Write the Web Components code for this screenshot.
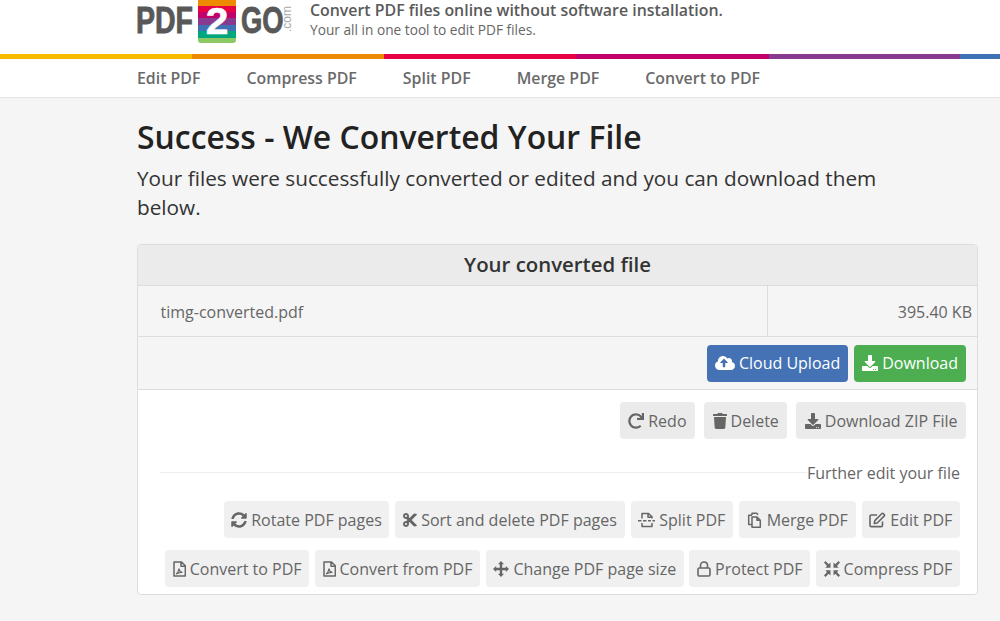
<!DOCTYPE html>
<html lang="en">
<head>
<meta charset="utf-8">
<title>PDF2GO</title>
<style>
  html { overflow: hidden; }
  body { margin: 0; background: #f5f5f5; font-family: "Open Sans", sans-serif; color: #555; }
</style>
</head>
<body>
<site-header></site-header>
<colour-bar></colour-bar>
<site-nav></site-nav>
<result-page></result-page>

<script>
const FA = {
  download: [512, '<path d="M216 0h80c13.3 0 24 10.7 24 24v168h87.7c17.8 0 26.7 21.5 14.1 34.1L269.7 378.3c-7.5 7.5-19.8 7.5-27.3 0L90.1 226.1c-12.6-12.6-3.7-34.1 14.1-34.1H192V24c0-13.3 10.7-24 24-24zm296 376v112c0 13.3-10.7 24-24 24H24c-13.3 0-24-10.7-24-24V376c0-13.3 10.7-24 24-24h146.7l49 49c20.1 20.1 52.5 20.1 72.6 0l49-49H488c13.3 0 24 10.7 24 24zm-124 88c0-11-9-20-20-20s-20 9-20 20 9 20 20 20 20-9 20-20zm64 0c0-11-9-20-20-20s-20 9-20 20 9 20 20 20 20-9 20-20z"/>'],
  trash: [448, '<path d="M432 32H312l-9.4-18.7A24 24 0 0 0 281.1 0H166.8a23.72 23.72 0 0 0-21.4 13.3L136 32H16A16 16 0 0 0 0 48v32a16 16 0 0 0 16 16h416a16 16 0 0 0 16-16V48a16 16 0 0 0-16-16zM53.2 467a48 48 0 0 0 47.9 45h245.8a48 48 0 0 0 47.9-45L416 128H32z"/>'],
  redo: [512, '<path d="M500.33 0h-47.41a12 12 0 0 0-12 12.57l4 82.76A247.42 247.42 0 0 0 256 8C119.34 8 7.9 119.53 8 256.19 8.1 393.07 119.1 504 256 504a247.1 247.1 0 0 0 166.18-63.91 12 12 0 0 0 .48-17.43l-34-34a12 12 0 0 0-16.38-.55A176 176 0 1 1 402.1 157.8l-101.53-4.87a12 12 0 0 0-12.57 12v47.41a12 12 0 0 0 12 12h200.33a12 12 0 0 0 12-12V12a12 12 0 0 0-12-12z"/>'],
  sync: [512, '<path d="M370.72 133.28C339.458 104.008 298.888 87.962 255.848 88c-77.458.068-144.328 53.178-162.791 126.85-1.344 5.363-6.122 9.15-11.651 9.15H24.103c-7.498 0-13.194-6.807-11.807-14.176C33.933 94.924 134.813 8 256 8c66.448 0 126.791 26.136 171.315 68.685L463.03 40.97C478.149 25.851 504 36.559 504 57.941V192c0 13.255-10.745 24-24 24H345.941c-21.382 0-32.09-25.851-16.971-40.971l41.75-41.749zM32 296h134.059c21.382 0 32.09 25.851 16.971 40.971l-41.75 41.75c31.262 29.273 71.835 45.319 114.876 45.28 77.418-.07 144.315-53.144 162.787-126.849 1.344-5.363 6.122-9.15 11.651-9.15h57.304c7.498 0 13.194 6.807 11.807 14.176C478.067 417.076 377.187 504 256 504c-66.448 0-126.791-26.136-171.315-68.685L48.97 471.03C33.851 486.149 8 475.441 8 454.059V320c0-13.255 10.745-24 24-24z"/>'],
  cut: [448, '<path d="M278.06 256L444.48 89.57c4.69-4.69 4.69-12.29 0-16.97-32.8-32.8-85.99-32.8-118.79 0L210.18 188.12l-24.86-24.86c4.31-10.92 6.68-22.81 6.68-35.26 0-53.02-42.98-96-96-96S0 74.98 0 128s42.98 96 96 96c4.54 0 8.99-.32 13.36-.93L142.29 256l-32.93 32.93c-4.37-.61-8.83-.93-13.36-.93-53.02 0-96 42.98-96 96s42.98 96 96 96 96-42.98 96-96c0-12.45-2.37-24.34-6.68-35.26l24.86-24.86L325.69 439.4c32.8 32.8 85.99 32.8 118.79 0 4.69-4.68 4.69-12.28 0-16.97L278.06 256zM96 160c-17.64 0-32-14.36-32-32s14.36-32 32-32 32 14.36 32 32-14.36 32-32 32zm0 256c-17.64 0-32-14.36-32-32s14.36-32 32-32 32 14.36 32 32-14.36 32-32 32z"/>'],
  cloud: [640, '<path fill-rule="evenodd" d="M537.6 226.6c4.1-10.7 6.4-22.4 6.4-34.6 0-53-43-96-96-96-19.7 0-38.1 6-53.3 16.2C367 64.2 315.3 32 256 32c-88.4 0-160 71.6-160 160 0 2.7.1 5.4.2 8.1C40.2 219.8 0 273.2 0 336c0 79.500 64.500 144 144 144h368c70.700 0 128-57.300 128-128 0-61.900-44-113.600-102.400-125.400zM393 259.300h-65V372c0 8.800-7.200 16-16 16h-48c-8.800 0-16-7.200-16-16V259.300h-65c-14.300 0-21.400-17.200-11.300-27.300l105-105c6.200-6.200 16.400-6.200 22.600 0l105 105c10.100 10.100 3 27.300-11.300 27.300z"/>'],
  split: [17, '<path fill="none" stroke="currentColor" stroke-width="1.5" stroke-linejoin="round" d="M4 6.500V1.500h6.500L14 4.800v1.700M10 1.500v3.700h4M4 11v3.500h10V11"/><path fill="none" stroke="currentColor" stroke-width="1.500" d="M0 8.800h3.500M5 8.800h3.500M10 8.800h3M14.500 8.800H17"/>'],
  copy: [16, '<path fill="none" stroke="currentColor" stroke-width="1.5" stroke-linejoin="round" d="M5 3V1.200h4.600L11 2.600M5 12.500H1.700V3.200H5M5 5h5l3.300 3.200v7H5zM10 5v3.200h3.300"/>'],
  edit: [17, '<path fill="none" stroke="currentColor" stroke-width="1.600" stroke-linejoin="round" d="M13.500 9.500v3.700c0 .9-.6 1.400-1.400 1.400H2.400c-.8 0-1.400-.5-1.400-1.400V4.400C1 3.500 1.600 3 2.400 3H8"/><path fill="none" stroke="currentColor" stroke-width="1.600" stroke-linejoin="round" d="M5.800 8.600l-.5 2.900 2.900-.5 6.900-6.900c.5-.5.5-1.200 0-1.700l-.7-.7c-.5-.5-1.200-.5-1.700 0z"/>'],
  pdf: [13, '<path fill="none" stroke="currentColor" stroke-width="1.500" stroke-linejoin="round" d="M1 1h7.500l3.800 3.700V15H1zM8 1v4.200h4.300"/><path fill="none" stroke="currentColor" stroke-width="1.100" d="M3 13c1.400-.8 2.600-3 3-5.400.2 2 1.200 3.400 3.400 3.800-2-.1-4.700.4-6.400 1.600z"/>'],
  move: [16, '<path d="M8 0l3 3.200H9.200v3.600h3.600V5L16 8l-3.200 3V9.200H9.200v3.600H11L8 16l-3-3.200h1.800V9.200H3.200V11L0 8l3.200-3v1.800h3.600V3.200H5z"/>'],
  lock: [14, '<path fill="none" stroke="currentColor" stroke-width="1.600" d="M2.400 7h9.200c.8 0 1.400.6 1.400 1.400v5.200c0 .8-.6 1.400-1.400 1.400H2.400C1.600 15 1 14.400 1 13.600V8.400C1 7.600 1.600 7 2.400 7zM3.500 7V4.600C3.500 2.600 5 1 7 1s3.500 1.600 3.500 3.600V7"/>'],
  compress: [16, '<path d="M0 1.500L1.500 0l3.200 3.300L6.500 1.500v5.200H1.300L3 5zM16 1.500L14.500 0l-3.200 3.300-1.800-1.800v5.200h5.200L13 5zM0 14.500L1.500 16l3.200-3.300 1.800 1.800V9.300H1.300L3 11zM16 14.500L14.500 16l-3.200-3.300-1.800 1.800V9.300h5.200L13 11z"/>']
}

customElements.define('fa-icon', class extends HTMLElement {
  static get observedAttributes() {
    return ['name']
  }
  constructor() {
    super()
    this.attachShadow({ mode: 'open' })
  }
  attributeChangedCallback() {
    const [w, body] = FA[this.getAttribute('name')]
    const vh = w > 100 ? 512 : 16
    this.shadowRoot.innerHTML = `
      <style>
        :host { display: inline-flex; align-items: center; }
        svg { display: block; fill: currentColor; }
      </style>
      <svg width="${(16 * w / vh).toFixed(2)}" height="16" viewBox="0 0 ${w} ${vh}">${body}</svg>`
  }
})

const buttonTemplate = document.createElement('template')
buttonTemplate.innerHTML = `
  <style>
    :host {
      display: inline-flex;
      align-items: center;
      gap: 4px;
      height: 37px;
      box-sizing: border-box;
      padding: 0 7.7px;
      border-radius: 4px;
      background: #f0f0f0;
      color: #666;
      font-size: 16px;
      white-space: nowrap;
    }
    :host([kind=primary]) { padding: 0 8px; background: #4472b4; color: #fff; }
    :host([kind=success]) { padding: 0 8px; background: #4cae50; color: #fff; }
    :host([kind=plain]) { padding: 0 8.5px; background: #ebebeb; }
  </style>
  <fa-icon></fa-icon>
  <slot></slot>
`

customElements.define('pdf-button', class extends HTMLElement {
  constructor() {
    super()
    this.attachShadow({ mode: 'open' }).appendChild(buttonTemplate.content.cloneNode(true))
  }
  connectedCallback() {
    this.shadowRoot.querySelector('fa-icon').setAttribute('name', this.getAttribute('icon'))
  }
})

const logoTemplate = document.createElement('template')
logoTemplate.innerHTML = `
  <style>
    :host { display: block; width: 156px; height: 44px; }
    svg { display: block; }
    text { font-family: "Liberation Sans", sans-serif; font-weight: 700; }
    .word { fill: #585858; stroke: #585858; stroke-width: .9; }
    .two { fill: #fff; stroke: #fff; stroke-width: .6; }
    .com { fill: #a8a8a8; font-weight: 400; }
  </style>
  <svg width="156" height="44" viewBox="0 0 156 44">
    <text class="word" transform="translate(-1 33) scale(.77 1)" font-size="37">PDF</text>
    <clipPath id="block"><path d="M61 0h38v40q0 3-3 3H64q-3 0-3-3z"/></clipPath>
    <g clip-path="url(#block)">
      <rect x="61" y="0" width="38" height="6" fill="#ee8a00"/>
      <rect x="61" y="6" width="38" height="6" fill="#e60044"/>
      <rect x="61" y="12" width="38" height="6" fill="#c1006a"/>
      <rect x="61" y="18" width="38" height="7" fill="#883a90"/>
      <rect x="61" y="25" width="38" height="6" fill="#3f71b5"/>
      <rect x="61" y="31" width="38" height="7" fill="#00a67c"/>
      <rect x="61" y="38" width="38" height="5" fill="#8cc864"/>
    </g>
    <text class="two" transform="translate(68.700 34) scale(1.100 1)" font-size="37">2</text>
    <text class="word" transform="translate(104 33) scale(.74 1)" font-size="37">GO</text>
    <text class="com" transform="translate(154 32) rotate(-90)" font-size="12">.com</text>
  </svg>
`

customElements.define('pdf-logo', class extends HTMLElement {
  constructor() {
    super()
    this.attachShadow({ mode: 'open' }).appendChild(logoTemplate.content.cloneNode(true))
  }
})

const headerTemplate = document.createElement('template')
headerTemplate.innerHTML = `
  <style>
    :host {
      display: flex;
      gap: 17px;
      height: 54px;
      box-sizing: border-box;
      padding-left: 137px;
      background: #fff;
      overflow: hidden;
    }
    .tag { display: flex; flex-direction: column; }
    .title { font-size: 15.9px; font-weight: 600; line-height: 20px; color: #5a5a5a; }
    .sub { font-size: 13.7px; line-height: 20px; color: #666; }
  </style>
  <pdf-logo></pdf-logo>
  <div class="tag">
    <div class="title">Convert PDF files online without software installation.</div>
    <div class="sub">Your all in one tool to edit PDF files.</div>
  </div>
`

customElements.define('site-header', class extends HTMLElement {
  constructor() {
    super()
    this.attachShadow({ mode: 'open' }).appendChild(headerTemplate.content.cloneNode(true))
  }
})

const barTemplate = document.createElement('template')
barTemplate.innerHTML = `
  <style>
    :host { display: flex; height: 6px; background: #fff; }
    i { display: block; width: 192px; height: 5px; flex: none; }
    i:last-child { flex: 1; }
  </style>
  <i style="background:#f7bc00"></i>
  <i style="background:#ee8a00"></i>
  <i style="background:#e60044"></i>
  <i style="background:#c1006a;width:193px"></i>
  <i style="background:#883a90;width:191px"></i>
  <i style="background:#3f71b5"></i>
`

customElements.define('colour-bar', class extends HTMLElement {
  constructor() {
    super()
    this.attachShadow({ mode: 'open' }).appendChild(barTemplate.content.cloneNode(true))
  }
})

const navTemplate = document.createElement('template')
navTemplate.innerHTML = `
  <style>
    :host {
      display: flex;
      gap: 46px;
      align-items: center;
      height: 36px;
      padding: 0 0 1px 137px;
      background: #fff;
      border-bottom: 1px solid #e4e4e4;
      font-size: 15.9px;
      font-weight: 600;
      color: #6a6a6a;
    }
  </style>
  <span>Edit PDF</span>
  <span>Compress PDF</span>
  <span>Split PDF</span>
  <span>Merge PDF</span>
  <span>Convert to PDF</span>
`

customElements.define('site-nav', class extends HTMLElement {
  constructor() {
    super()
    this.attachShadow({ mode: 'open' }).appendChild(navTemplate.content.cloneNode(true))
  }
})

const pageTemplate = document.createElement('template')
pageTemplate.innerHTML = `
  <style>
    :host { display: block; padding: 17px 22px 0 137px; }
    h1 { margin: 0; font-size: 31.9px; line-height: 44px; font-weight: 600; color: #222; }
    p { margin: 5px 0 0; max-width: 780px; font-size: 20.75px; line-height: 29px; color: #333; }
    .card {
      margin-top: 22px;
      border: 1px solid #ddd;
      border-radius: 4px;
      background: #fff;
      overflow: hidden;
    }
    .card-title {
      height: 40px;
      line-height: 38px;
      text-align: center;
      background: #ebebeb;
      border-bottom: 1px solid #ddd;
      font-size: 20.4px;
      font-weight: 600;
      color: #333;
    }
    .file {
      display: flex;
      height: 50px;
      background: #f5f5f5;
      border-bottom: 1px solid #ddd;
      font-size: 16px;
      color: #666;
    }
    .file div { display: flex; align-items: center; padding-top: 2px; box-sizing: border-box; }
    .file .name { flex: 1; padding-left: 22.5px; border-right: 1px solid #ddd; }
    .file .size { width: 209px; padding-right: 5px; justify-content: flex-end; }
    .primary {
      display: flex;
      justify-content: flex-end;
      gap: 6px;
      align-items: center;
      height: 52px;
      padding-right: 11px;
      background: #f5f5f5;
      border-bottom: 1px solid #ddd;
    }
    .body { padding: 12px 11px 7px 22px; }
    .row { display: flex; justify-content: flex-end; }
    .actions { gap: 9px; }
    .further {
      display: flex;
      align-items: center;
      margin: 23px 6px 0 0;
      height: 22px;
      font-size: 16px;
      color: #666;
    }
    .further::before { content: ""; flex: 1; height: 1px; margin-top: -1px; background: #eee; }
    .tools { margin: 17px 6px 0 0; gap: 6px; }
    .tools.two { margin-top: 12px; gap: 5.6px; }
  </style>
  <h1>Success - We Converted Your File</h1>
  <p>Your files were successfully converted or edited and you can download them below.</p>
  <div class="card">
    <div class="card-title">Your converted file</div>
    <div class="file">
      <div class="name">timg-converted.pdf</div>
      <div class="size">395.40 KB</div>
    </div>
    <div class="primary">
      <pdf-button kind="primary" icon="cloud">Cloud Upload</pdf-button>
      <pdf-button kind="success" icon="download">Download</pdf-button>
    </div>
    <div class="body">
      <div class="row actions">
        <pdf-button kind="plain" icon="redo">Redo</pdf-button>
        <pdf-button kind="plain" icon="trash">Delete</pdf-button>
        <pdf-button kind="plain" icon="download">Download ZIP File</pdf-button>
      </div>
      <div class="further">Further edit your file</div>
      <div class="row tools">
        <pdf-button icon="sync">Rotate PDF pages</pdf-button>
        <pdf-button icon="cut">Sort and delete PDF pages</pdf-button>
        <pdf-button icon="split">Split PDF</pdf-button>
        <pdf-button icon="copy">Merge PDF</pdf-button>
        <pdf-button icon="edit">Edit PDF</pdf-button>
      </div>
      <div class="row tools two">
        <pdf-button icon="pdf">Convert to PDF</pdf-button>
        <pdf-button icon="pdf">Convert from PDF</pdf-button>
        <pdf-button icon="move">Change PDF page size</pdf-button>
        <pdf-button icon="lock">Protect PDF</pdf-button>
        <pdf-button icon="compress">Compress PDF</pdf-button>
      </div>
    </div>
  </div>
`

customElements.define('result-page', class extends HTMLElement {
  constructor() {
    super()
    this.attachShadow({ mode: 'open' }).appendChild(pageTemplate.content.cloneNode(true))
  }
})
</script>
</body>
</html>
